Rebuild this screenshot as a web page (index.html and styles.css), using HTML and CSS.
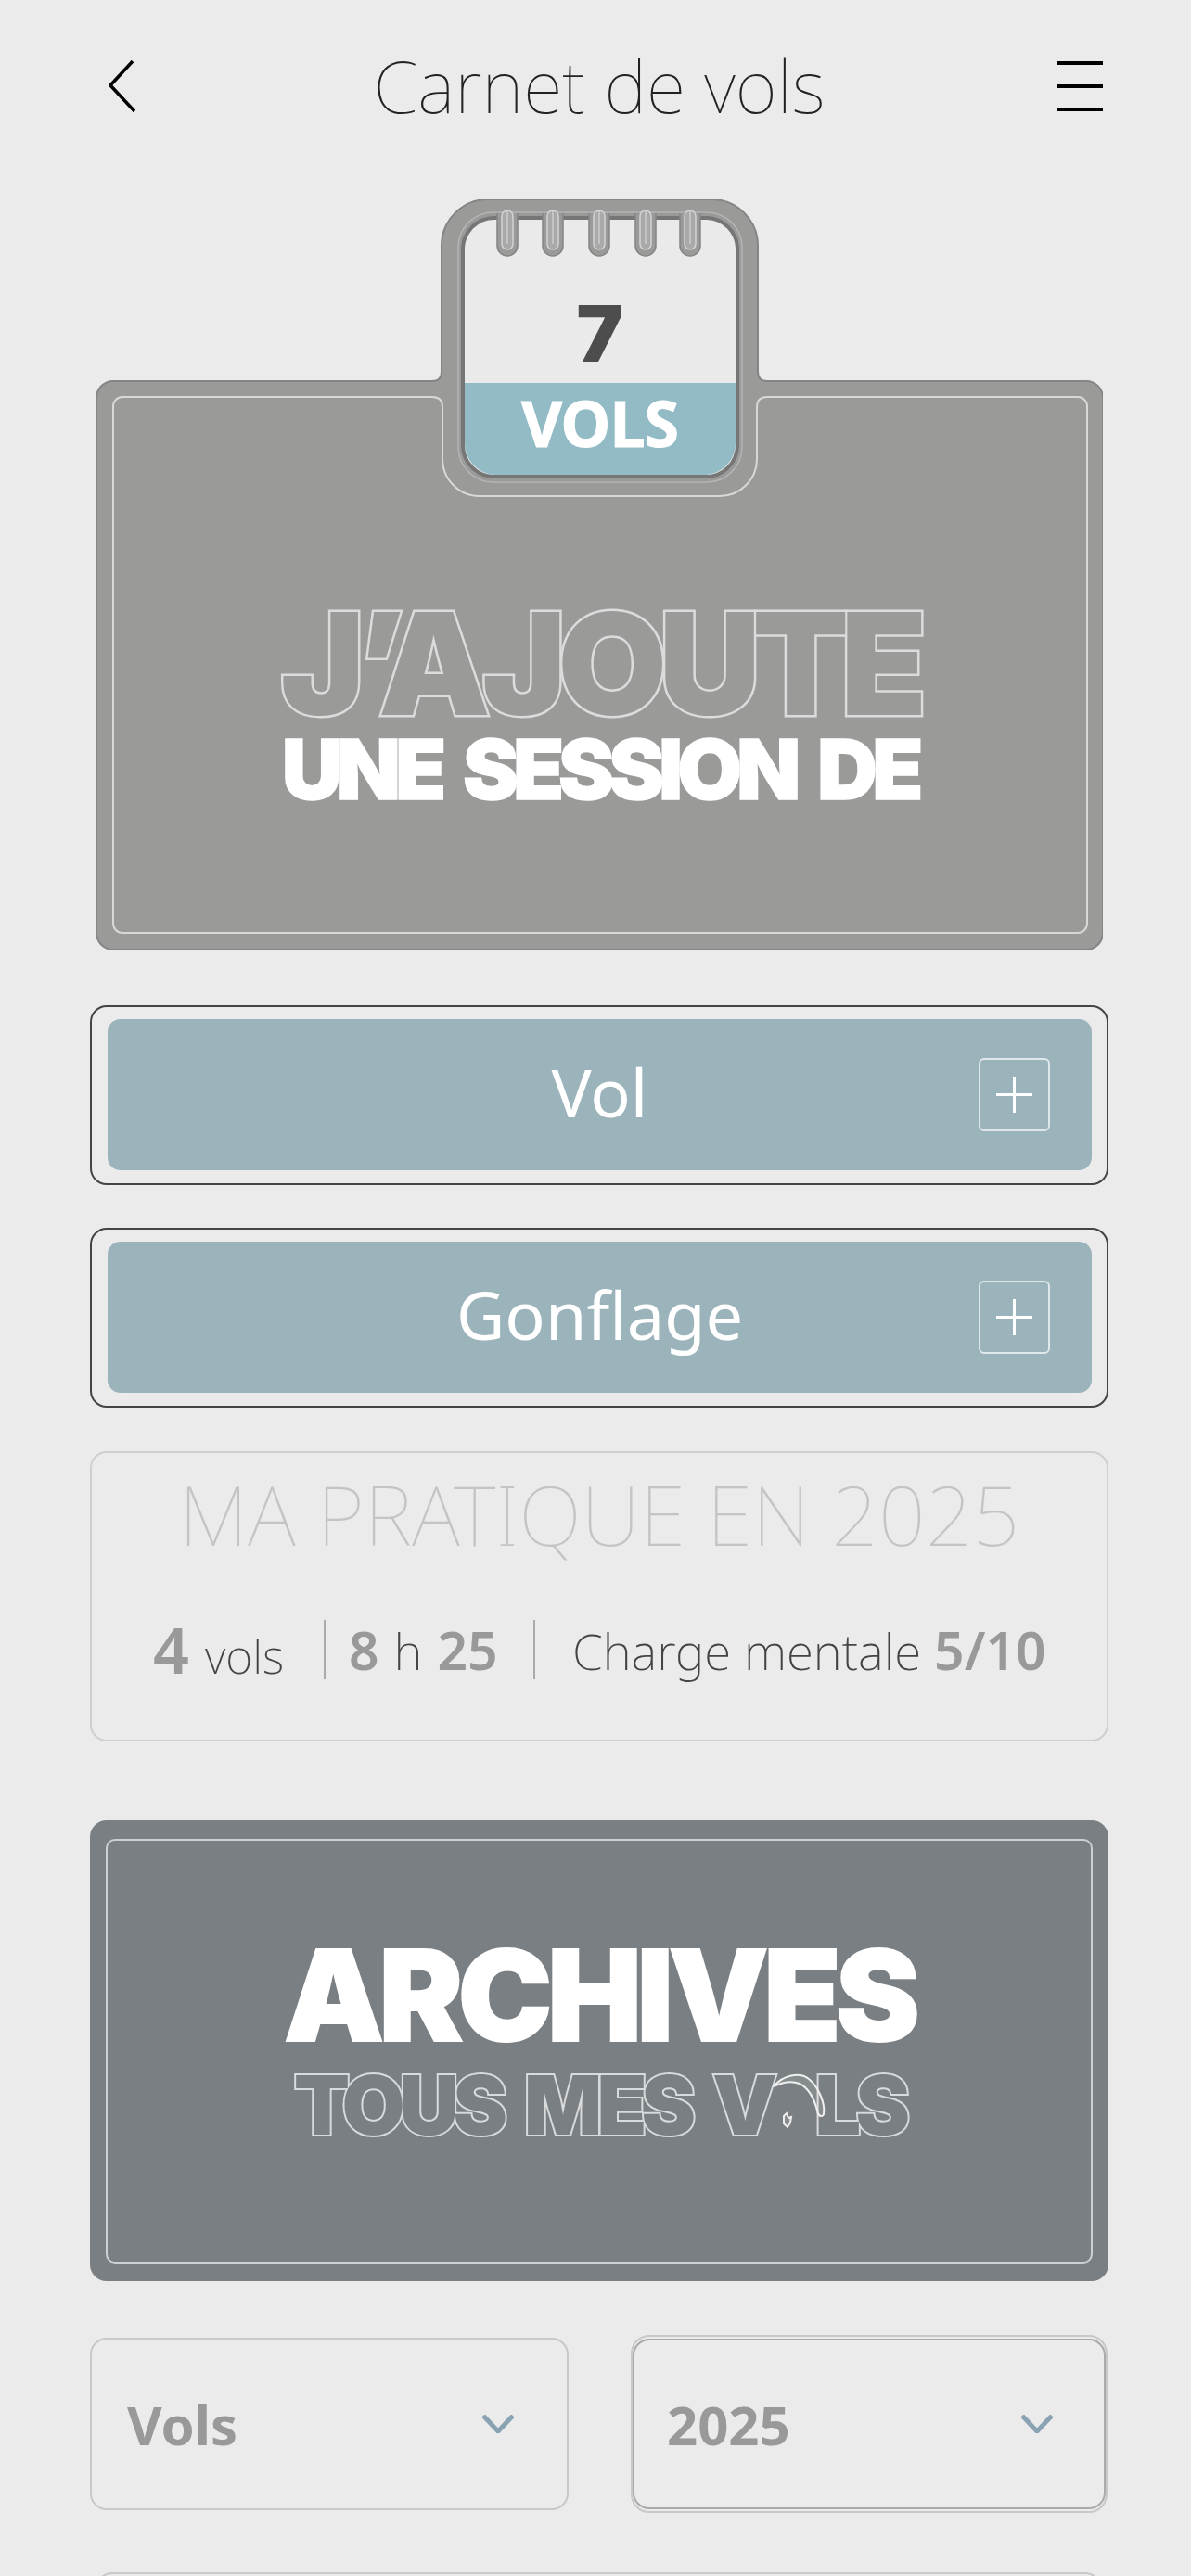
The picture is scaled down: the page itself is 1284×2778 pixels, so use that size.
FILE: index.html
```html
<!DOCTYPE html>
<html lang="fr">
<head>
    <meta charset="UTF-8" />
    <meta name="viewport" content="width=device-width, initial-scale=1" />
    <title>Carnet de vols</title>
    <link rel="stylesheet" href="styles.css">
</head>
<body>

    <header class="top-bar">
        <svg class="back-icon" viewBox="0 0 30 56" aria-hidden="true">
            <polyline points="26,1 2,27 28,55" />
        </svg>
        <h1>Carnet de vols</h1>
        <div class="burger"><span></span><span></span><span></span></div>
    </header>

    <section class="hero">
        <svg class="hero-shape" viewBox="0 0 1085 809" aria-hidden="true">
            <path class="hero-fill" d="M18 196H362Q372 196 372 186V50A50 50 0 0 1 422 0H663A50 50 0 0 1 713 50V186Q713 196 723 196H1067A18 18 0 0 1 1085 214V791A18 18 0 0 1 1067 809H18A18 18 0 0 1 0 791V214A18 18 0 0 1 18 196Z" />
            <path class="hero-line" d="M28 213H362Q373 213 373 224V280A40 40 0 0 0 413 320H672A40 40 0 0 0 712 280V224Q712 213 723 213H1058A10 10 0 0 1 1068 223V781A10 10 0 0 1 1058 791H28A10 10 0 0 1 18 781V223A10 10 0 0 1 28 213Z" />
            <rect class="paper-halo" x="390" y="14" width="306" height="291" rx="38" />
            <rect class="paper" x="395" y="20" width="296" height="279" rx="34" />
            <path class="paper-band" d="M397 198H689V263A34 34 0 0 1 655 297H431A34 34 0 0 1 397 263Z" />
            <g class="rings">
                <g><path class="ring-out" d="M432 15V50A11 11 0 0 0 454 50V15" /><rect x="437" y="12" width="12" height="42" rx="6" /><path class="ring-mid" d="M443 12V48" /></g>
                <g><path class="ring-out" d="M481 15V50A11 11 0 0 0 503 50V15" /><rect x="486" y="12" width="12" height="42" rx="6" /><path class="ring-mid" d="M492 12V48" /></g>
                <g><path class="ring-out" d="M531 15V50A11 11 0 0 0 553 50V15" /><rect x="536" y="12" width="12" height="42" rx="6" /><path class="ring-mid" d="M542 12V48" /></g>
                <g><path class="ring-out" d="M581 15V50A11 11 0 0 0 603 50V15" /><rect x="586" y="12" width="12" height="42" rx="6" /><path class="ring-mid" d="M592 12V48" /></g>
                <g><path class="ring-out" d="M629 15V50A11 11 0 0 0 651 50V15" /><rect x="634" y="12" width="12" height="42" rx="6" /><path class="ring-mid" d="M640 12V48" /></g>
            </g>
        </svg>
        <div class="tab-count">7</div>
        <div class="tab-label">VOLS</div>
        <div class="hero-outline">J’AJOUTE</div>
        <div class="hero-solid">UNE SESSION DE</div>
    </section>

    <div class="add-btn">
        <div class="add-btn-inner">
            <span class="add-btn-label">Vol</span>
            <span class="plus-box"></span>
        </div>
    </div>

    <div class="add-btn">
        <div class="add-btn-inner">
            <span class="add-btn-label">Gonflage</span>
            <span class="plus-box"></span>
        </div>
    </div>

    <section class="stats">
        <h2>MA PRATIQUE EN 2025</h2>
        <div class="stats-row">
            <div class="stat stat-vols"><b class="big">4</b> <span>vols</span></div>
            <div class="stat stat-time"><b>8</b> <span>h</span> <b>25</b></div>
            <div class="stat stat-load"><span>Charge mentale</span> <b>5/10</b></div>
        </div>
    </section>

    <section class="archives">
        <div class="archives-frame">
            <div class="archives-title">ARCHIVES</div>
            <div class="archives-sub">TOUS MES V<span class="glider-o">O<svg viewBox="0 0 60 62" aria-hidden="true">
                <path d="M2 16C12 4 30 0 40 8C50 16 58 34 56 46C54 50 50 48 49 42C46 30 40 18 30 13C20 9 10 12 2 16Z" />
                <path d="M13 48L16 45L18 50L21 49L20 55L17 60L13 56Z" />
            </svg></span>LS</div>
        </div>
    </section>

    <div class="filters">
        <div class="select">
            <span>Vols</span>
            <svg class="select-arrow" viewBox="0 0 36 20" aria-hidden="true"><polyline points="2,1 18,18 34,1" /></svg>
        </div>
        <div class="select-ring">
            <div class="select">
                <span>2025</span>
                <svg class="select-arrow" viewBox="0 0 36 20" aria-hidden="true"><polyline points="2,1 18,18 34,1" /></svg>
            </div>
        </div>
    </div>

    <div class="next-clip">
        <div class="next-card"></div>
    </div>

</body>
</html>
```

FILE: styles.css
```css
html {
    height: 2778px;
    overflow: hidden;
}

body {
    margin: 0;
    height: 2778px;
    overflow: hidden;
    box-sizing: border-box;
    padding: 60px 89px 0 97px;
    background: #ebebeb;
    font-family: "Noto Sans", sans-serif;
}

/* Header */
.top-bar {
    display: grid;
    grid-template-columns: 1fr auto 1fr;
    align-items: center;
    height: 65px;
}

.top-bar h1 {
    margin: 0;
    font-family: "Noto Sans", sans-serif;
    font-size: 78px;
    font-weight: 100;
    line-height: 65px;
    color: #222;
}

.back-icon {
    width: 30px;
    height: 56px;
    margin-left: 20px;
    fill: none;
    stroke: #000;
    stroke-width: 3.5;
}

.burger {
    justify-self: end;
    display: flex;
    flex-direction: column;
    gap: 21px;
    width: 50px;
    margin-right: 6px;
}

    .burger span {
        height: 4px;
        background: #000;
    }

/* Hero card with the notebook tab */
.hero {
    position: relative;
    height: 809px;
    margin: 90px 6px 0 7px;
    display: flex;
    flex-direction: column;
    align-items: center;
    color: #fff;
}

.hero-shape {
    position: absolute;
    top: 0;
    left: 0;
    width: 100%;
    height: 100%;
}

.hero-fill {
    fill: #9a9a99;
    stroke: #858585;
    stroke-width: 2;
}

.hero-line {
    fill: none;
    stroke: #d8d8d8;
    stroke-width: 2;
}

.paper-halo {
    fill: none;
    stroke: #b4b4b4;
    stroke-width: 1.5;
}

.paper {
    fill: #eaeaea;
    stroke: #767676;
    stroke-width: 4;
}

.paper-band {
    fill: #92bbc5;
}

.ring-out {
    fill: #9a9a99;
    stroke: #858585;
    stroke-width: 1.5;
}

.rings rect {
    fill: #a9a9a9;
    stroke: #d4d4d4;
    stroke-width: 1.5;
}

.ring-mid {
    fill: none;
    stroke: #dedede;
    stroke-width: 1;
}

.tab-count,
.tab-label,
.hero-outline,
.hero-solid {
    position: relative;
    text-align: center;
    white-space: nowrap;
}

.tab-count {
    margin-top: 100px;
    font-family: Inter, sans-serif;
    font-size: 84px;
    font-weight: 900;
    line-height: 90px;
    color: #4d4d4d;
}

.tab-label {
    margin-top: 16px;
    font-family: "Noto Sans", sans-serif;
    font-size: 68px;
    font-weight: 700;
    line-height: 70px;
    letter-spacing: -1px;
    -webkit-text-stroke: 1px #fff;
}

/* merged outline: stroke first, then the card colour over it */
.hero-outline {
    margin-top: 160px;
    font-family: Inter, sans-serif;
    font-size: 152px;
    font-weight: 900;
    line-height: 130px;
    letter-spacing: -9px;
    color: #9a9a99;
    -webkit-text-stroke: 5px #dcdcdc;
    paint-order: stroke fill;
}

.hero-solid {
    margin-top: 9px;
    font-family: Inter, sans-serif;
    font-size: 90px;
    font-weight: 900;
    line-height: 80px;
    letter-spacing: -6px;
    word-spacing: 12px;
    -webkit-text-stroke: 1.5px #fff;
}

/* Add buttons */
.add-btn {
    height: 194px;
    box-sizing: border-box;
    margin-top: 46px;
    padding: 13px 16px 14px 17px;
    border: 2px solid #444;
    border-radius: 18px;
}

.hero + .add-btn {
    margin-top: 60px;
}

.add-btn-inner {
    height: 100%;
    display: grid;
    grid-template-columns: 1fr auto 1fr;
    align-items: center;
    padding-right: 45px;
    padding-left: 45px;
    background: #9bb3ba;
    border-radius: 14px;
    color: #fff;
}

.add-btn-label {
    grid-column: 2;
    padding-bottom: 8px;
    font-size: 72px;
    line-height: 90px;
}

.plus-box {
    position: relative;
    grid-column: 3;
    justify-self: end;
    width: 77px;
    height: 79px;
    box-sizing: border-box;
    border: 2px solid #dfe7ea;
    border-radius: 6px;
}

    .plus-box::before,
    .plus-box::after {
        content: "";
        position: absolute;
        background: #fff;
    }

    .plus-box::before {
        left: 17px;
        right: 17px;
        top: 36px;
        height: 3px;
    }

    .plus-box::after {
        top: 18px;
        bottom: 18px;
        left: 35px;
        width: 3px;
    }

/* Yearly summary */
.stats {
    height: 313px;
    box-sizing: border-box;
    margin-top: 47px;
    padding-top: 16px;
    border: 2px solid #cfcfcf;
    border-radius: 18px;
    text-align: center;
}

    .stats h2 {
        margin: 0;
        font-size: 89px;
        font-weight: 100;
        line-height: 100px;
        color: #c4c4c4;
        white-space: nowrap;
    }

.stats-row {
    display: flex;
    align-items: stretch;
    margin-top: 64px;
    padding-left: 66px;
    white-space: nowrap;
}

.stat {
    display: flex;
    align-items: baseline;
    height: 64px;
    line-height: 64px;
    font-size: 53px;
    font-weight: 200;
    color: #444;
}

    .stat b {
        font-size: 57px;
        font-weight: 600;
        color: #999;
    }

    .stat .big {
        font-size: 68px;
    }

.stat-vols {
    width: 184px;
    gap: 17px;
}

    .stat-vols span {
        font-size: 50px;
    }

.stat-time {
    width: 199px;
    padding-left: 25px;
    gap: 16px;
    border-left: 2px solid #aaa;
}

.stat-load {
    padding-left: 40px;
    gap: 14px;
    border-left: 2px solid #aaa;
}

/* Archives card */
.archives {
    height: 497px;
    box-sizing: border-box;
    margin-top: 85px;
    padding: 20px 17px 19px;
    background: #7a7f83;
    border-radius: 18px;
    color: #fff;
    text-align: center;
}

.archives-frame {
    height: 100%;
    box-sizing: border-box;
    padding-top: 107px;
    border: 2px solid #cdd0d2;
    border-radius: 10px;
}

.archives-title {
    font-family: Inter, sans-serif;
    font-size: 136px;
    font-weight: 900;
    line-height: 120px;
    letter-spacing: -5.5px;
    white-space: nowrap;
    -webkit-text-stroke: 2px #fff;
}

.archives-sub {
    margin-top: 18px;
    font-family: Inter, sans-serif;
    font-size: 88px;
    font-weight: 900;
    line-height: 80px;
    letter-spacing: -5.8px;
    word-spacing: 12px;
    white-space: nowrap;
    color: #7a7f83;
    -webkit-text-stroke: 4px #d8dadb;
    paint-order: stroke fill;
}

.glider-o {
    position: relative;
    letter-spacing: -22px;
    color: transparent;
    -webkit-text-stroke: 0 transparent;
}

    .glider-o svg {
        position: absolute;
        left: 0;
        top: 17px;
        width: 60px;
        height: 62px;
        fill: rgba(255, 255, 255, 0.1);
        stroke: #eee;
        stroke-width: 2;
    }

/* Filters */
.filters {
    display: flex;
    align-items: center;
    justify-content: space-between;
    height: 192px;
    margin-top: 58px;
    padding-right: 1px;
}

.select {
    display: flex;
    align-items: center;
    justify-content: space-between;
    width: 516px;
    height: 186px;
    box-sizing: border-box;
    padding: 0 56px 0 38px;
    border: 2px solid #c8c8c8;
    border-radius: 18px;
    font-size: 58px;
    font-weight: 700;
    color: #999;
}

.select-ring {
    width: 514px;
    box-sizing: border-box;
    padding: 2px 0;
    border: 2px solid #c8c8c8;
    border-radius: 20px;
}

    .select-ring .select {
        width: 100%;
        height: 184px;
        padding: 0 54px 0 35px;
        border-color: #aaa;
    }

.select-arrow {
    width: 36px;
    height: 20px;
    fill: none;
    stroke: #8aa3b3;
    stroke-width: 5;
}

.next-clip {
    height: 4px;
    margin: 64px 7px 0 6px;
    overflow: hidden;
}

.next-card {
    height: 300px;
    box-sizing: border-box;
    border: 2px solid #c8c8c8;
    border-radius: 18px;
}
```
